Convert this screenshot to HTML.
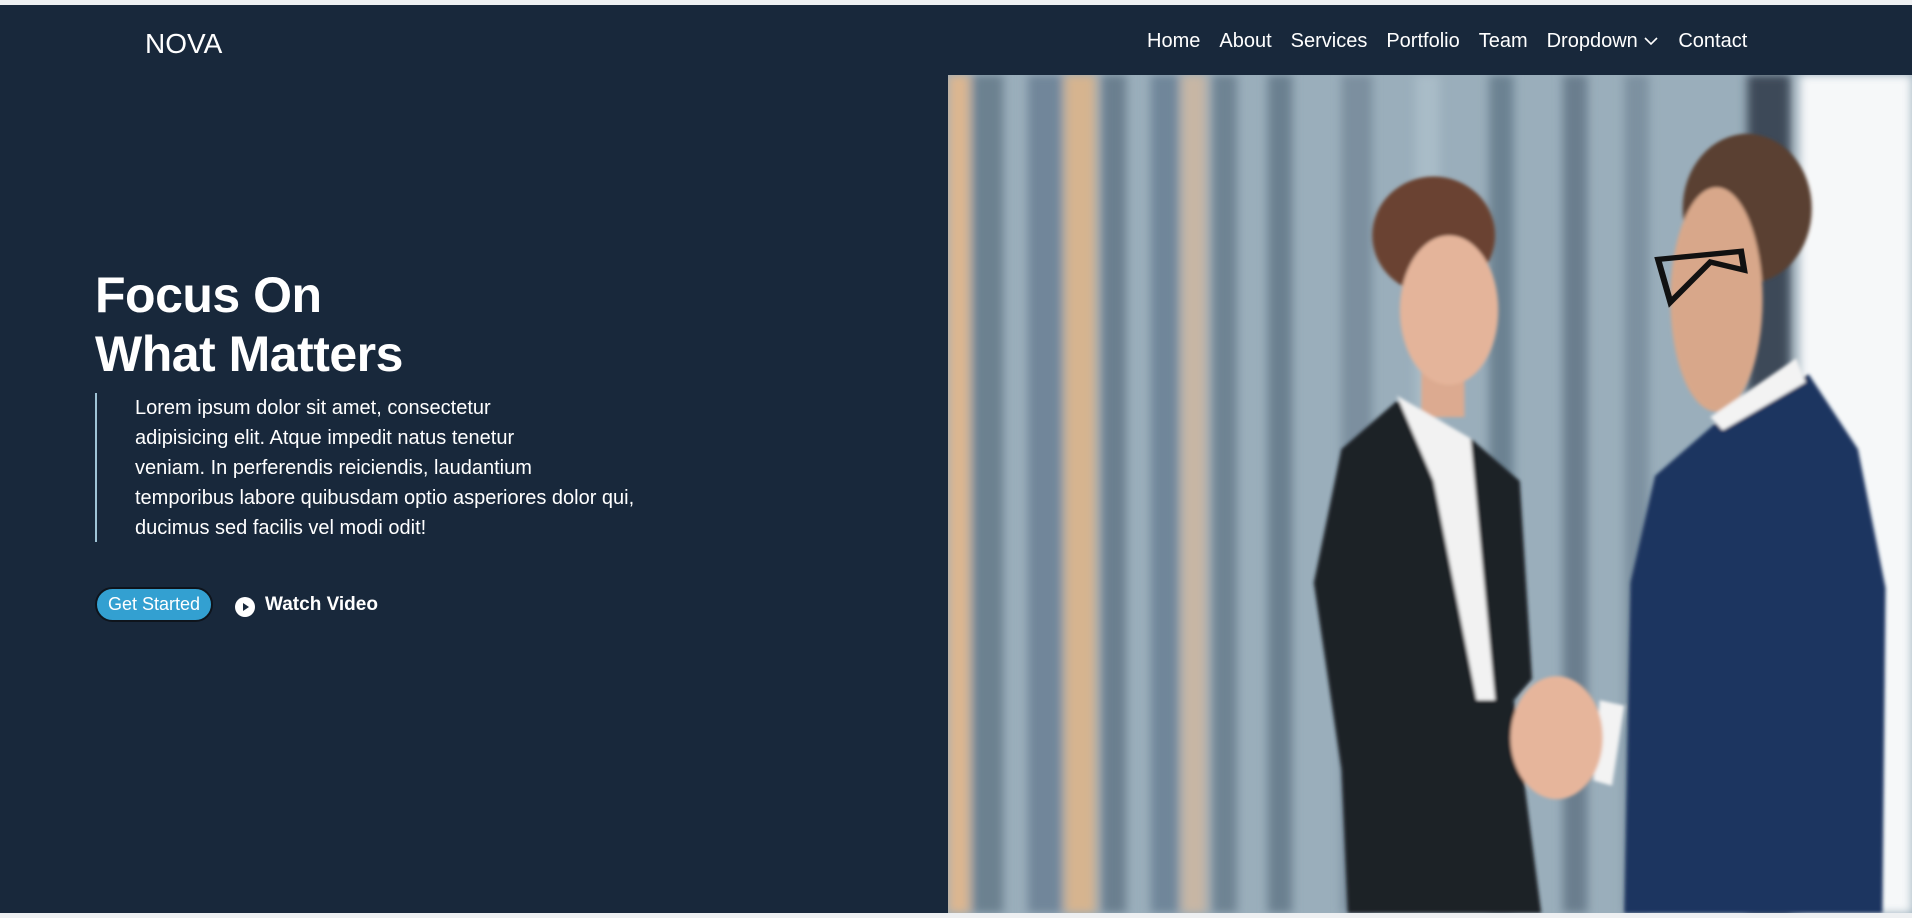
<!DOCTYPE html>
<html><head><meta charset="utf-8"><style>
*{margin:0;padding:0;box-sizing:border-box}
html,body{width:1912px;height:918px;overflow:hidden;background:#eef0f2;font-family:"Liberation Sans",sans-serif}
.hero{position:absolute;left:0;top:5px;width:1912px;height:908px;background:#18283b}
.logo{position:absolute;left:145px;top:23px;color:#fff;font-size:28px;letter-spacing:0}
.nav{position:absolute;top:25px;left:1147px;color:#fff;font-size:20px;white-space:nowrap}
.nav span{margin-right:19px}
.img{position:absolute;left:948px;top:75px;width:964px;height:838px}
h1{position:absolute;left:95px;top:266px;color:#fff;font-size:50px;font-weight:bold;line-height:59px;letter-spacing:-0.5px}
.p{position:absolute;left:95px;top:393px;height:149px;border-left:2px solid #9fc3d6;padding-left:38px;color:#fff;font-size:20px;line-height:30px;white-space:nowrap}
.btn{position:absolute;left:95px;top:587px;width:118px;height:35px;border-radius:18px;background:#33a0d1;border:2px solid #0e141c;color:#fff;font-size:18px;text-align:center;line-height:31px}
.play{position:absolute;left:235px;top:597px;width:20px;height:20px;border-radius:50%;background:#fff}
.play:after{content:"";position:absolute;left:8px;top:6px;border-left:6px solid #18283b;border-top:4px solid transparent;border-bottom:4px solid transparent}
.wv{position:absolute;left:265px;top:594px;color:#fff;font-size:19px;font-weight:bold}
</style></head><body>
<div class="hero">
<div class="logo">NOVA</div>
<div class="nav"><span>Home</span><span>About</span><span>Services</span><span>Portfolio</span><span>Team</span><span>Dropdown <svg width="16" height="12" viewBox="0 0 16 12"><path d="M2 3 L8 9 L14 3" stroke="#fff" stroke-width="1.6" fill="none"/></svg></span><span>Contact</span></div>
</div>
<svg class="img" viewBox="0 0 1568 1568" preserveAspectRatio="none">
<defs><filter id="b"><feGaussianBlur stdDeviation="8"/></filter><filter id="s"><feGaussianBlur stdDeviation="3"/></filter></defs>
<rect width="1568" height="1568" fill="#9aaebb"/>
<g filter="url(#b)">
<rect x="0" y="0" width="35" height="1568" fill="#dcb690"/>
<rect x="40" width="50" height="1568" fill="#6c8190"/>
<rect x="130" width="55" height="1568" fill="#71869a"/>
<rect x="190" width="50" height="1568" fill="#d6b48f"/>
<rect x="250" width="40" height="1568" fill="#6a7f8f"/>
<rect x="330" width="45" height="1568" fill="#70869a"/>
<rect x="380" width="40" height="1568" fill="#c7b6a4"/>
<rect x="430" width="40" height="1568" fill="#6e8393"/>
<rect x="520" width="40" height="1568" fill="#6a8090"/>
<rect x="640" width="50" height="1568" fill="#7b8f9f"/>
<rect x="760" width="40" height="1568" fill="#a9bcc7"/>
<rect x="880" width="40" height="1568" fill="#6c8292"/>
<rect x="1000" width="40" height="1568" fill="#6a7e8e"/>
<rect x="1100" width="40" height="1568" fill="#7d91a0"/>
<rect x="1300" width="70" height="1568" fill="#3c4a58"/>
<rect x="1385" width="183" height="1568" fill="#f6f8f9"/>
</g>
<g filter="url(#s)">
<ellipse cx="790" cy="300" rx="100" ry="110" fill="#6b4232"/>
<rect x="770" y="500" width="70" height="140" fill="#dcaa90"/>
<ellipse cx="815" cy="440" rx="80" ry="140" fill="#e4b49a"/>
<path d="M640,700 L730,610 L850,680 L930,760 L950,1130 L920,1170 L965,1568 L650,1568 L640,1300 L595,950 Z" fill="#1e2127"/>
<path d="M730,600 L850,680 L890,1170 L860,1170 L790,760 Z" fill="#f2f2f2"/>
<ellipse cx="1300" cy="250" rx="105" ry="140" fill="#5a4131"/>
<ellipse cx="1250" cy="420" rx="75" ry="210" fill="#d8a78a"/>
<path d="M1250,650 L1400,560 L1480,700 L1525,960 L1520,1568 L1100,1568 L1110,950 L1150,750 Z" fill="#1f3560"/>
<path d="M1240,640 L1380,530 L1395,575 L1260,665 Z" fill="#f3f3f3"/>
<path d="M1060,1170 L1100,1180 L1080,1330 L1050,1320 Z" fill="#f3f3f3"/>
<ellipse cx="990" cy="1240" rx="75" ry="115" fill="#e6b59b"/>
</g>
<path d="M1155,345 L1290,330 L1295,365 L1240,350 L1175,425 Z" fill="none" stroke="#111" stroke-width="10"/>
</svg>
<h1>Focus On<br>What Matters</h1>
<div class="p">Lorem ipsum dolor sit amet, consectetur<br>adipisicing elit. Atque impedit natus tenetur<br>veniam. In perferendis reiciendis, laudantium<br>temporibus labore quibusdam optio asperiores dolor qui,<br>ducimus sed facilis vel modi odit!</div>
<div class="btn">Get Started</div>
<div class="play"></div>
<div class="wv">Watch Video</div>
</body></html>
